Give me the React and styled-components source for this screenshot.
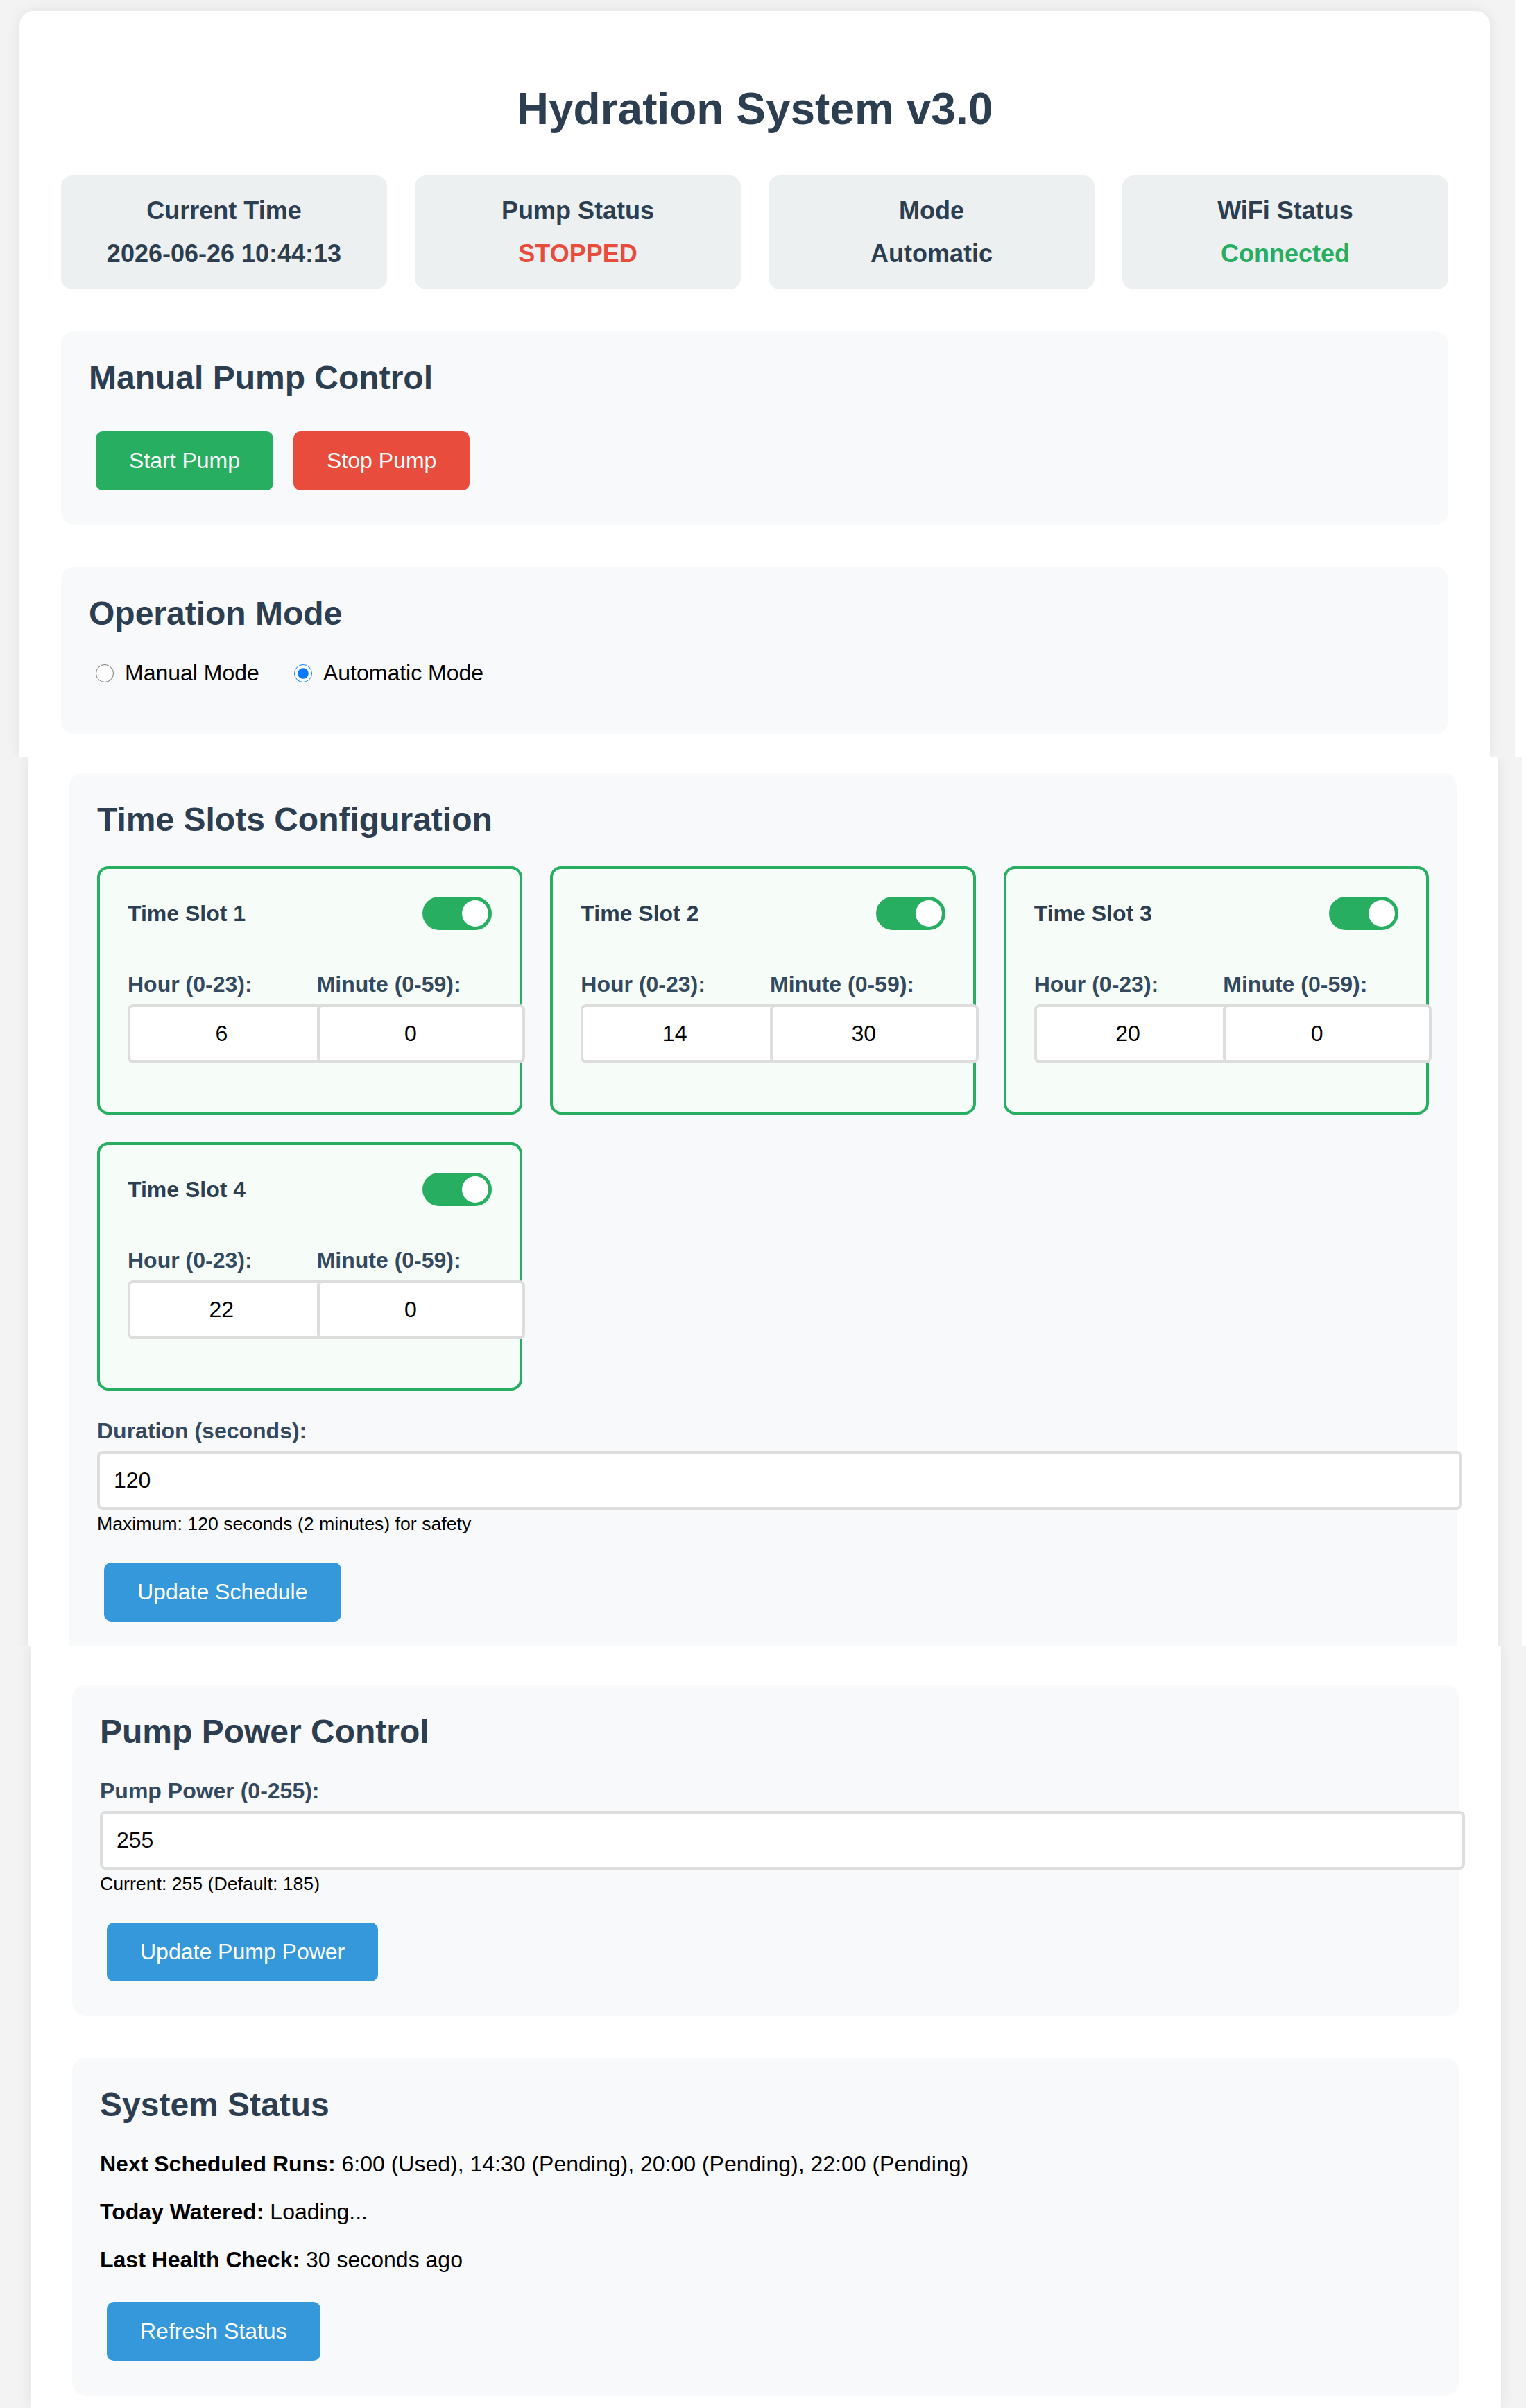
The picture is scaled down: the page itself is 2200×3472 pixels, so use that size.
import React from 'react';
import styled, { createGlobalStyle } from 'styled-components';

const GlobalStyle = createGlobalStyle`
  html, body {
    margin: 0;
    padding: 0;
    background: #f3f3f3;
  }
  body {
    font-family: "Liberation Sans", Arial, Helvetica, sans-serif;
    color: #000;
  }
`;

const Page = styled.div`
  width: 2200px;
  height: 3472px;
  overflow: hidden;
  display: flex;
  flex-direction: column;
`;

// the reference is a stitched capture: three strips, each scrolled a little differently
const Strip = styled.div`
  flex: none;
  height: ${p => p.$h}px;
  overflow: hidden;
  box-sizing: border-box;
  padding-top: ${p => p.$top || 0}px;
  padding-left: ${p => p.$left}px;
  background: linear-gradient(to right, #f3f3f3 calc(100% - ${p => p.$edge}px), #fff 0);
`;

const Sheet = styled.div`
  width: 2120px;
  min-height: 100%;
  box-sizing: border-box;
  background: #fff;
  padding: ${p => p.$padTop}px 60px 0;
  border-radius: ${p => (p.$first ? '20px 20px 0 0' : '0')};
  box-shadow: 0 0 20px rgba(0, 0, 0, 0.08);
`;

const Title = styled.h1`
  margin: 44px 0 59px;
  text-align: center;
  font-size: 64px;
  font-weight: bold;
  color: #2c3e50;
`;

const StatusGrid = styled.div`
  display: grid;
  grid-template-columns: repeat(4, 1fr);
  gap: 40px;
  margin-bottom: 60px;
`;

const StatusCard = styled.div`
  background: #ecf0f1;
  border-radius: 16px;
  padding: 30px;
  text-align: center;
`;

const StatusLabel = styled.h3`
  margin: 0 0 20px;
  font-size: 36px;
  font-weight: bold;
  color: #2c3e50;
`;

const StatusValue = styled.div`
  font-size: 36px;
  font-weight: bold;
  color: ${p => p.$color || '#2c3e50'};
`;

const Section = styled.section`
  background: #f8f9fa;
  border-radius: 20px;
  padding: 40px;
  margin-bottom: 60px;
`;

const SectionTitle = styled.h2`
  margin: 0 0 40px;
  font-size: 48px;
  font-weight: bold;
  color: #2c3e50;
`;

const ButtonRow = styled.div`
  display: flex;
  gap: 9px;
`;

const Button = styled.button`
  margin: 10px;
  padding: 24px 48px;
  border: none;
  border-radius: 10px;
  font-family: inherit;
  font-size: 32px;
  color: #fff;
  background: ${p => p.$bg};
  cursor: pointer;
`;

const RadioRow = styled.div`
  display: flex;
  align-items: center;
  margin-bottom: 30px;
  font-size: 32px;
`;

const RadioLabel = styled.label`
  display: flex;
  align-items: center;
  margin-right: 40px;
`;

const Radio = styled.input`
  width: 26px;
  height: 26px;
  margin: 0 16px 0 10px;
  accent-color: #0a7aff;
`;

const SlotGrid = styled.div`
  display: grid;
  grid-template-columns: repeat(3, 1fr);
  gap: 40px;
  margin-bottom: 40px;
`;

const SlotCard = styled.div`
  border: 4px solid #27ae60;
  border-radius: 16px;
  background: #f6fdf8;
  padding: 40px;
`;

const SlotHeader = styled.div`
  display: flex;
  justify-content: space-between;
  align-items: center;
  margin-bottom: 60px;
  font-size: 32px;
  font-weight: bold;
  color: #2c3e50;
`;

const Switch = styled.span`
  display: flex;
  justify-content: ${p => (p.$on ? 'flex-end' : 'flex-start')};
  align-items: center;
  width: 100px;
  height: 48px;
  box-sizing: border-box;
  padding: 0 5px;
  border-radius: 24px;
  background: ${p => (p.$on ? '#27ae60' : '#ccc')};
`;

const Knob = styled.span`
  width: 38px;
  height: 38px;
  border-radius: 50%;
  background: #fff;
`;

const TimeRow = styled.div`
  display: grid;
  grid-template-columns: 1fr 1fr;
  gap: 20px;
  margin-bottom: 30px;
`;

const FieldLabel = styled.label`
  display: block;
  margin-bottom: 10px;
  font-size: 32px;
  font-weight: bold;
  color: #34495e;
`;

// content-box inputs overflow their column, as in the reference
const TimeInput = styled.input`
  display: block;
  position: relative;
  width: calc(100% - 30px);
  padding: 20px 50px 20px 20px;
  border: 4px solid #ddd;
  border-radius: 8px;
  background: #fff;
  font-family: inherit;
  font-size: 32px;
  text-align: center;
  color: #000;
`;

const FormGroup = styled.div`
  margin-bottom: 30px;
`;

const WideInput = styled.input`
  display: block;
  width: 100%;
  padding: 20px;
  border: 4px solid #ddd;
  border-radius: 8px;
  background: #fff;
  font-family: inherit;
  font-size: 32px;
  color: #000;
`;

const Hint = styled.small`
  display: block;
  margin-top: 5px;
  font-size: 26.67px;
  color: #000;
`;

const InfoLine = styled.p`
  margin: 32px 0;
  font-size: 32px;
  color: #000;
`;

const slots = [
  { id: 1, hour: 6, minute: 0 },
  { id: 2, hour: 14, minute: 30 },
  { id: 3, hour: 20, minute: 0 },
  { id: 4, hour: 22, minute: 0 },
];

const App = () => {
  return (
    <Page>
      <GlobalStyle />

      <Strip $h={1092} $top={16} $left={28} $edge={16}>
        <Sheet $padTop={60} $first>
          <Title>Hydration System v3.0</Title>

          <StatusGrid>
            <StatusCard>
              <StatusLabel>Current Time</StatusLabel>
              <StatusValue>2026-06-26 10:44:13</StatusValue>
            </StatusCard>
            <StatusCard>
              <StatusLabel>Pump Status</StatusLabel>
              <StatusValue $color="#e74c3c">STOPPED</StatusValue>
            </StatusCard>
            <StatusCard>
              <StatusLabel>Mode</StatusLabel>
              <StatusValue>Automatic</StatusValue>
            </StatusCard>
            <StatusCard>
              <StatusLabel>WiFi Status</StatusLabel>
              <StatusValue $color="#27ae60">Connected</StatusValue>
            </StatusCard>
          </StatusGrid>

          <Section>
            <SectionTitle>Manual Pump Control</SectionTitle>
            <ButtonRow>
              <Button $bg="#27ae60">Start Pump</Button>
              <Button $bg="#e74c3c">Stop Pump</Button>
            </ButtonRow>
          </Section>

          <Section>
            <SectionTitle>Operation Mode</SectionTitle>
            <RadioRow>
              <RadioLabel>
                <Radio type="radio" name="mode" value="manual" />
                Manual Mode
              </RadioLabel>
              <RadioLabel>
                <Radio type="radio" name="mode" value="auto" defaultChecked />
                Automatic Mode
              </RadioLabel>
            </RadioRow>
          </Section>
        </Sheet>
      </Strip>

      <Strip $h={1282} $left={40} $edge={6}>
        <Sheet $padTop={22}>
          <Section>
            <SectionTitle>Time Slots Configuration</SectionTitle>
            <SlotGrid>
              {slots.map(slot => (
                <SlotCard key={slot.id}>
                  <SlotHeader>
                    <span>Time Slot {slot.id}</span>
                    <Switch $on>
                      <Knob />
                    </Switch>
                  </SlotHeader>
                  <TimeRow>
                    <div>
                      <FieldLabel>Hour (0-23):</FieldLabel>
                      <TimeInput type="text" defaultValue={slot.hour} />
                    </div>
                    <div>
                      <FieldLabel>Minute (0-59):</FieldLabel>
                      <TimeInput type="text" defaultValue={slot.minute} />
                    </div>
                  </TimeRow>
                </SlotCard>
              ))}
            </SlotGrid>

            <FormGroup>
              <FieldLabel>Duration (seconds):</FieldLabel>
              <WideInput type="text" defaultValue="120" />
              <Hint>Maximum: 120 seconds (2 minutes) for safety</Hint>
            </FormGroup>
            <ButtonRow>
              <Button $bg="#3498db">Update Schedule</Button>
            </ButtonRow>
          </Section>
        </Sheet>
      </Strip>

      <Strip $h={1098} $left={44} $edge={0}>
        <Sheet $padTop={55}>
          <Section>
            <SectionTitle>Pump Power Control</SectionTitle>
            <FormGroup>
              <FieldLabel>Pump Power (0-255):</FieldLabel>
              <WideInput type="text" defaultValue="255" />
              <Hint>Current: 255 (Default: 185)</Hint>
            </FormGroup>
            <ButtonRow>
              <Button $bg="#3498db">Update Pump Power</Button>
            </ButtonRow>
          </Section>

          <Section>
            <SectionTitle>System Status</SectionTitle>
            <InfoLine>
              <strong>Next Scheduled Runs:</strong> 6:00 (Used), 14:30 (Pending), 20:00 (Pending), 22:00 (Pending)
            </InfoLine>
            <InfoLine>
              <strong>Today Watered:</strong> Loading...
            </InfoLine>
            <InfoLine>
              <strong>Last Health Check:</strong> 30 seconds ago
            </InfoLine>
            <ButtonRow>
              <Button $bg="#3498db">Refresh Status</Button>
            </ButtonRow>
          </Section>
        </Sheet>
      </Strip>
    </Page>
  );
};

export default App;
